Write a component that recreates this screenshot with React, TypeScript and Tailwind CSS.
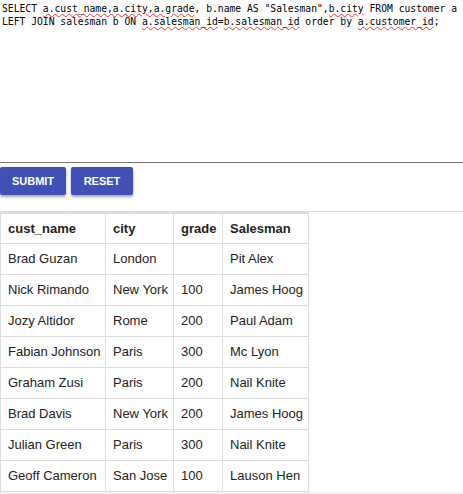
const rows = [
  ['Brad Guzan', 'London', '', 'Pit Alex'],
  ['Nick Rimando', 'New York', '100', 'James Hoog'],
  ['Jozy Altidor', 'Rome', '200', 'Paul Adam'],
  ['Fabian Johnson', 'Paris', '300', 'Mc Lyon'],
  ['Graham Zusi', 'Paris', '200', 'Nail Knite'],
  ['Brad Davis', 'New York', '200', 'James Hoog'],
  ['Julian Green', 'Paris', '300', 'Nail Knite'],
  ['Geoff Cameron', 'San Jose', '100', 'Lauson Hen'],
];

const widths = ['w-[105px]', 'w-[68px]', 'w-[49px]', 'w-[86px]'];

function Sq({ children }: { children: string }) {
  return (
    <span className="underline decoration-wavy decoration-[#e53935] decoration-1 underline-offset-[1px]">
      {children}
    </span>
  );
}

export default function App() {
  return (
    <div className="w-[463px] h-[494px] overflow-hidden bg-white font-['Liberation_Sans',Arial,sans-serif]">
      {/* query editor */}
      <div className="h-[163px] border-b border-[#767676] overflow-hidden px-[2px] pt-[2px] font-['DejaVu_Sans_Mono','Liberation_Mono',monospace] text-[9.7px] leading-[13px] text-black whitespace-pre">
        <div>
          SELECT <Sq>a.cust_name,a.city,a.grade</Sq>, b.name AS "Salesman",<Sq>b.city</Sq> FROM customer a
        </div>
        <div>
          LEFT JOIN salesman b ON <Sq>a.salesman_id</Sq>=<Sq>b.salesman_id</Sq> order by <Sq>a.customer_id</Sq>;
        </div>
      </div>

      <div className="flex gap-[5px] pt-[4px] pb-[16px]">
        <button className="h-[28px] w-[66px] rounded-[2px] bg-[#3f51b5] text-white text-[11px] font-bold shadow-[0_2px_3px_rgba(0,0,0,0.35)]">
          SUBMIT
        </button>
        <button className="h-[28px] w-[62px] rounded-[2px] bg-[#3f51b5] text-white text-[11px] font-bold shadow-[0_2px_3px_rgba(0,0,0,0.35)]">
          RESET
        </button>
      </div>

      <div className="border-t border-[#dddddd]">
        <table className="table-fixed w-[309px] border-collapse border-t-2 border-[#dddddd] text-[13px] text-[#222]">
          <thead>
            <tr>
              {['cust_name', 'city', 'grade', 'Salesman'].map((h, i) => (
                <th
                  key={h}
                  className={`${widths[i]} h-[30px] border border-[#dddddd] px-[7px] text-left font-bold align-middle`}
                >
                  {h}
                </th>
              ))}
            </tr>
          </thead>
          <tbody>
            {rows.map((r) => (
              <tr key={r[0]}>
                {r.map((c, i) => (
                  <td
                    key={i}
                    className={`${widths[i]} h-[31px] border border-[#dddddd] px-[7px] whitespace-nowrap align-middle`}
                  >
                    {c}
                  </td>
                ))}
              </tr>
            ))}
          </tbody>
        </table>
      </div>
      <div className="h-[10px] bg-[#f1f1f1]" />
    </div>
  );
}
